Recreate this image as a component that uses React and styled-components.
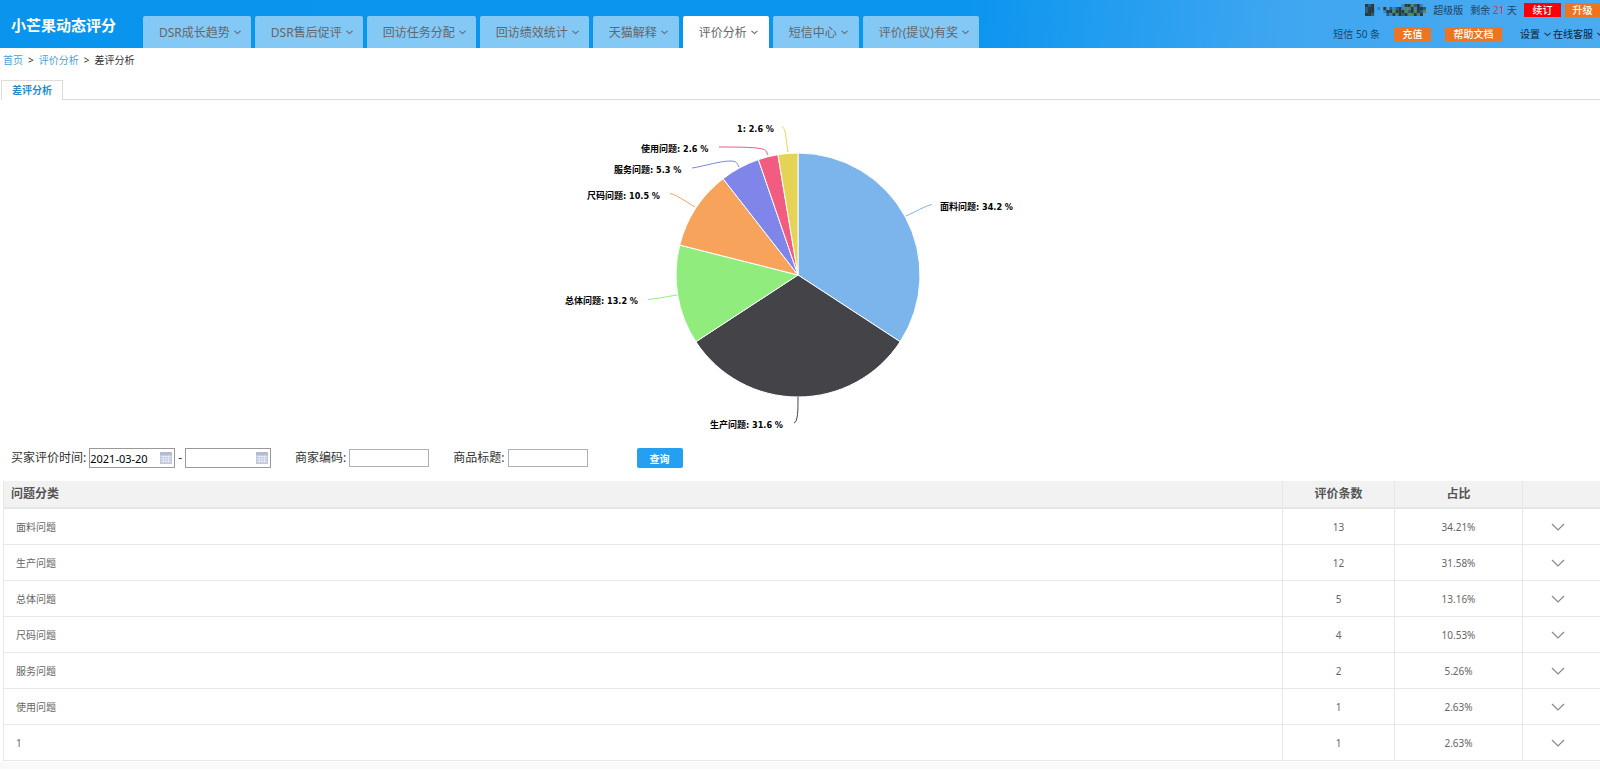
import React from 'react';
import styled, { createGlobalStyle } from 'styled-components';

const Global = createGlobalStyle`
  * { box-sizing: border-box; }
  body {
    margin: 0;
    background: #fff;
    color: #333;
    font-family: "Noto Sans", "Noto Sans CJK SC", sans-serif;
    font-size: 10px;
    line-height: 16px;
  }
  a { text-decoration: none; color: inherit; }
  button, input { font-family: inherit; margin: 0; }
`;

const Page = styled.div`
  overflow: hidden;
`;

const Header = styled.header`
  display: flex;
  height: 48px;
  background: linear-gradient(97deg, #0994ee 0%, #0a95ef 60%, #3fa6f1 80%, #4aabf0 100%);
`;

const Brand = styled.h1`
  flex: none;
  width: 143px;
  margin: 0;
  padding: 14px 0 0 11px;
  color: #fff;
  font-size: 15px;
  line-height: 22px;
  font-weight: 700;
`;

const Nav = styled.nav`
  display: flex;
  flex: none;
  gap: 4px;
  padding-top: 16px;
`;

const NavTab = styled.a`
  display: flex;
  align-items: center;
  gap: 4px;
  min-width: 86px;
  padding: 1px 10px 0 16px;
  border-radius: 2px 2px 0 0;
  background: ${(p) => (p.$active ? '#fff' : '#84c8f6')};
  color: #666;
  font-size: 12px;
  white-space: nowrap;
`;

const Account = styled.div`
  display: flex;
  flex-direction: column;
  align-items: flex-end;
  gap: 8px;
  margin-left: auto;
  padding-top: 2px;
  color: #1c4668;
  white-space: nowrap;
`;

const AccountRow = styled.div`
  display: flex;
  align-items: center;
  height: 16px;
  gap: ${(p) => p.$gap};
`;

const Days = styled.b`
  color: #e0284c;
  font-weight: 400;
`;

const Badge = styled.button`
  width: ${(p) => p.$width};
  height: 14px;
  padding: 0;
  border: 0;
  background: ${(p) => (p.$red ? '#fb0007' : '#ee7420')};
  color: #fff;
  font-size: 10px;
  line-height: 13px;
  font-weight: 500;
`;

const ButtonGroup = styled.div`
  display: flex;
  gap: ${(p) => p.$gap};
`;

const HelpLinks = styled.div`
  display: flex;
  gap: 2px;
  margin: 0 -4px 0 4px;
  color: #0a2238;
`;

const HelpLink = styled.a`
  display: flex;
  align-items: center;
  gap: 4px;
`;

const Breadcrumb = styled.nav`
  display: flex;
  gap: 5px;
  padding: 4px 3px 12px;
  a { color: #4a9fd8; }
`;

const SubTabs = styled.div`
  display: flex;
  height: 20px;
  padding-left: 1px;
  &::after {
    content: "";
    flex: 1;
    border-bottom: 1px solid #dcdcdc;
  }
`;

const SubTab = styled.a`
  width: 62px;
  border: 1px solid #e0dcdc;
  border-bottom: 0;
  color: #2a8ccb;
  font-weight: 700;
  line-height: 19px;
  text-align: center;
`;

const ChartArea = styled.section`
  display: flex;
  justify-content: center;
  height: 340px;
`;

const ChartText = styled.text`
  font-family: "DejaVu Sans Condensed", "Noto Sans CJK SC", sans-serif;
  font-size: 9px;
  font-weight: 700;
  fill: #000;
`;

const Filters = styled.form`
  display: flex;
  align-items: center;
  height: 36px;
  margin-bottom: 5px;
  padding-left: 11px;
  gap: 24px;
  font-size: 12px;
`;

const Field = styled.div`
  display: flex;
  align-items: center;
  gap: 3px;
`;

const DateBox = styled.div`
  position: relative;
  svg { position: absolute; right: 3px; top: 4px; }
`;

const DateInput = styled.input`
  display: block;
  width: 86px;
  height: 20px;
  padding: 0 16px 0 0;
  border: 1px solid #999;
  border-radius: 0;
  color: #000;
  font-size: 11px;
`;

const TextInput = styled.input`
  width: 80px;
  height: 18px;
  padding: 0 2px;
  border: 1px solid #b0b0b0;
  border-radius: 0;
  font-size: 11px;
`;

const Query = styled.button`
  width: 46px;
  height: 20px;
  margin-left: 25px;
  padding: 0;
  border: 0;
  border-radius: 2px;
  background: #259ff0;
  color: #fff;
  font-size: 10px;
  font-weight: 700;
`;

const TableWrap = styled.div`
  padding: 0 0 8px 3px;
  background: linear-gradient(#fff, #fff) top / 100% calc(100% - 7px) no-repeat #f9f9f9;
`;

const Table = styled.table`
  width: 100%;
  table-layout: fixed;
  border-collapse: separate;
  border-spacing: 0;
  border-left: 1px solid #e8e8e8;
  color: #666;
`;

const Col = styled.col`
  width: ${(p) => p.$width};
`;

const Th = styled.th`
  height: 28px;
  padding: 0 0 0 ${(p) => (p.$first ? '7px' : '0')};
  border-left: ${(p) => (p.$first ? '0' : '1px solid #e6e6e6')};
  border-bottom: 2px solid #e6e6e6;
  background: #f2f2f2;
  color: #555;
  font-size: 12px;
  line-height: 16px;
  text-align: ${(p) => (p.$first ? 'left' : 'center')};
`;

const Td = styled.td`
  height: 36px;
  padding: 0 ${(p) => (p.$action ? '8px' : '0')} 0 ${(p) => (p.$first ? '12px' : '0')};
  border-left: ${(p) => (p.$first ? '0' : '1px solid #e6e6e6')};
  border-bottom: 1px solid #e8e8e8;
  text-align: ${(p) => (p.$first ? 'left' : 'center')};
`;

const Expand = styled.button`
  display: block;
  margin: 0 auto;
  padding: 0;
  border: 0;
  background: none;
  svg { display: block; }
`;

const Caret = ({ color = '#667' }) => (
  <svg width="7" height="5" viewBox="0 0 7 5" fill="none" stroke={color} strokeWidth="1.1" aria-hidden="true">
    <path d="M0.5 0.8 3.5 3.6 6.5 0.8" />
  </svg>
);

const CalendarIcon = () => (
  <svg width="12" height="12" viewBox="0 0 12 12" aria-hidden="true">
    <rect x="0" y="0" width="12" height="12" fill="#c3c9df" />
    <rect x="0" y="0" width="12" height="3" fill="#b4bbd8" />
    <path d="M1 4.5h10M1 7h10M1 9.5h10M3.5 3.5v7M6 3.5v7M8.500 3.500v7" stroke="#e9ecf6" strokeWidth="0.8" />
  </svg>
);

const mosaic = [
  '32300000000013342310',
  '23301030212314431332',
  '23300013343334234324',
  '33200002134323443430',
];
const mosaicColors = ['none', '#3b84ba', '#2c5a80', '#2a3b40', '#4f8a5c'];

const MaskedName = () => (
  <svg width="61" height="12" viewBox="0 0 60 12" preserveAspectRatio="none" role="img" aria-label="账号">
    {mosaic.map((line, y) =>
      [...line].map((c, x) => (
        <rect key={`${x}-${y}`} x={x * 3} y={y * 3} width="3" height="3" fill={mosaicColors[c]} />
      ))
    )}
  </svg>
);

const tabs = ['DSR成长趋势', 'DSR售后促评', '回访任务分配', '回访绩效统计', '天猫解释', '评价分析', '短信中心', '评价(提议)有奖'];

const data = [
  { name: '面料问题', count: 13, share: '34.21%', label: '34.2 %', color: '#7cb5ec', x: 940, y: 210, line: 'M932 204.500C925 206 915 212 906 216' },
  { name: '生产问题', count: 12, share: '31.58%', label: '31.6 %', color: '#434348', x: 710, y: 428, line: 'M794 423C798 422 798 410 798 397' },
  { name: '总体问题', count: 5, share: '13.16%', label: '13.2 %', color: '#90ed7d', x: 565, y: 304, line: 'M648 299.500C655 299 665 297 677 295' },
  { name: '尺码问题', count: 4, share: '10.53%', label: '10.5 %', color: '#f7a35c', x: 587, y: 199, line: 'M670 193.500C675 194 685 201 695 207' },
  { name: '服务问题', count: 2, share: '5.26%', label: '5.3 %', color: '#8085e9', x: 614, y: 173, line: 'M692 168C705 166 720 161 730 161C737 161 737 163 739 167' },
  { name: '使用问题', count: 1, share: '2.63%', label: '2.6 %', color: '#f15c80', x: 641, y: 152, line: 'M719 147C740 147 765 147 766 151L768 155' },
  { name: '1', count: 1, share: '2.63%', label: '2.6 %', color: '#e4d354', x: 737, y: 132, line: 'M782 127C786 127 786 142 788 152' },
];

const CENTER = { x: 798, y: 275, r: 122 };
const total = data.reduce((sum, d) => sum + d.count, 0);

function slicePath(start, end) {
  const at = (v) => {
    const a = (v / total) * Math.PI * 2;
    return `${CENTER.x + CENTER.r * Math.sin(a)} ${CENTER.y - CENTER.r * Math.cos(a)}`;
  };
  const large = end - start > total / 2 ? 1 : 0;
  return `M${CENTER.x} ${CENTER.y}L${at(start)}A${CENTER.r} ${CENTER.r} 0 ${large} 1 ${at(end)}Z`;
}

const Pie = () => {
  let acc = 0;
  return (
    <svg width="600" height="340" viewBox="500 100 600 340" role="img" aria-label="差评分析">
      {data.map((d) => {
        const start = acc;
        acc += d.count;
        return <path key={d.name} d={slicePath(start, acc)} fill={d.color} stroke="#fff" strokeWidth="1" strokeLinejoin="round" />;
      })}
      {data.map((d) => (
        <g key={d.name}>
          <path d={d.line} fill="none" stroke={d.color} strokeWidth="1" />
          <ChartText x={d.x} y={d.y}>{`${d.name}: ${d.label}`}</ChartText>
        </g>
      ))}
    </svg>
  );
};

export default function App() {
  return (
    <Page>
      <Global />
      <Header>
        <Brand>小芒果动态评分</Brand>
        <Nav>
          {tabs.map((t) => (
            <NavTab key={t} href="#" $active={t === '评价分析'}>
              {t}
              <Caret />
            </NavTab>
          ))}
        </Nav>
        <Account>
          <AccountRow $gap="7px">
            <MaskedName />
            <span>超级版</span>
            <span>剩余 <Days>21</Days> 天</span>
            <ButtonGroup $gap="4px">
              <Badge $red $width="37px">续订</Badge>
              <Badge $width="35px">升级</Badge>
            </ButtonGroup>
          </AccountRow>
          <AccountRow $gap="14px">
            <span>短信 50 条</span>
            <Badge $width="37px">充值</Badge>
            <Badge $width="57px">帮助文档</Badge>
            <HelpLinks>
              <HelpLink href="#">设置<Caret color="#234" /></HelpLink>
              <HelpLink href="#">在线客服<Caret color="#234" /></HelpLink>
            </HelpLinks>
          </AccountRow>
        </Account>
      </Header>

      <Breadcrumb>
        <a href="#">首页</a>
        <span>&gt;</span>
        <a href="#">评价分析</a>
        <span>&gt;</span>
        <span>差评分析</span>
      </Breadcrumb>

      <SubTabs>
        <SubTab href="#">差评分析</SubTab>
      </SubTabs>

      <ChartArea>
        <Pie />
      </ChartArea>

      <Filters onSubmit={(e) => e.preventDefault()}>
        <Field>
          <label htmlFor="from">买家评价时间:</label>
          <DateBox>
            <DateInput id="from" defaultValue="2021-03-20" />
            <CalendarIcon />
          </DateBox>
          <span>-</span>
          <DateBox>
            <DateInput id="to" aria-label="结束时间" />
            <CalendarIcon />
          </DateBox>
        </Field>
        <Field>
          <label htmlFor="code">商家编码:</label>
          <TextInput id="code" />
        </Field>
        <Field>
          <label htmlFor="title">商品标题:</label>
          <TextInput id="title" />
        </Field>
        <Query type="submit">查询</Query>
      </Filters>

      <TableWrap>
        <Table>
          <colgroup>
            <Col />
            <Col $width="112px" />
            <Col $width="128px" />
            <Col $width="78px" />
          </colgroup>
          <thead>
            <tr>
              <Th $first>问题分类</Th>
              <Th>评价条数</Th>
              <Th>占比</Th>
              <Th />
            </tr>
          </thead>
          <tbody>
            {data.map((d) => (
              <tr key={d.name}>
                <Td $first>{d.name}</Td>
                <Td>{d.count}</Td>
                <Td>{d.share}</Td>
                <Td $action>
                  <Expand type="button" aria-label="展开">
                    <svg width="14" height="8" viewBox="0 0 14 8" fill="none" stroke="#888" strokeWidth="1.2">
                      <path d="M1 1 7 7 13 1" />
                    </svg>
                  </Expand>
                </Td>
              </tr>
            ))}
          </tbody>
        </Table>
      </TableWrap>
    </Page>
  );
}
